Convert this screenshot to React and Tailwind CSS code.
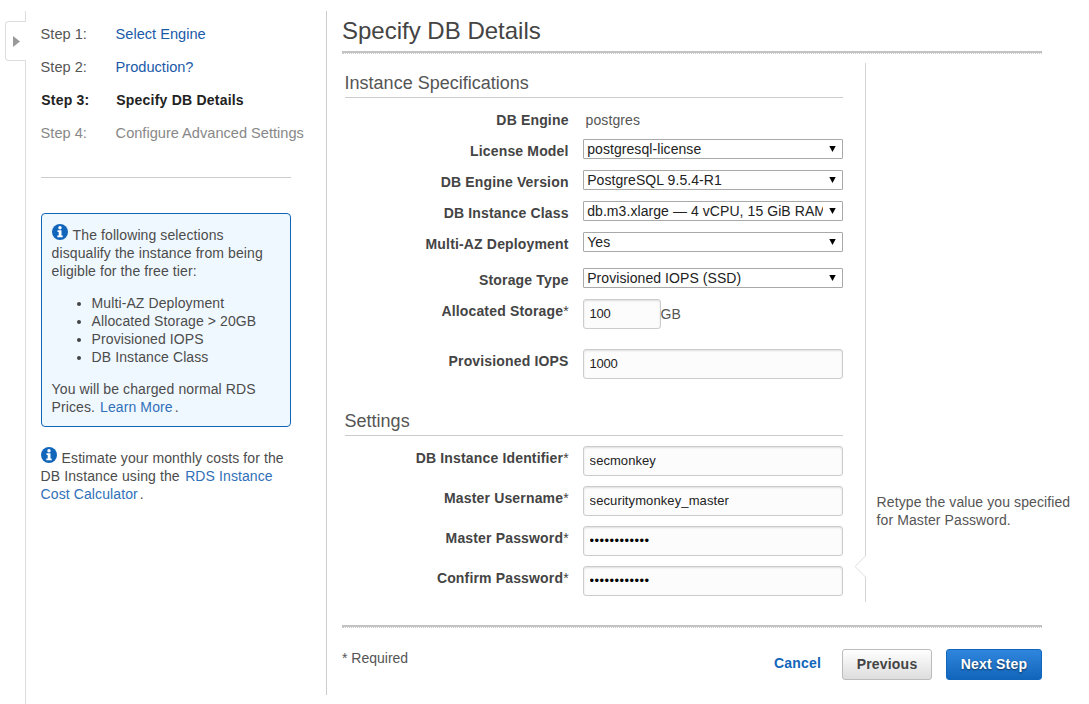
import React from "react";

const STEPS = [
  { n: "Step 1:", label: "Select Engine", state: "done" },
  { n: "Step 2:", label: "Production?", state: "done" },
  { n: "Step 3:", label: "Specify DB Details", state: "current" },
  { n: "Step 4:", label: "Configure Advanced Settings", state: "todo" },
];

function Step({ n, label, state }) {
  if (state === "current") {
    return (
      <li className="flex h-[33px] pl-[0.6px] text-[14px] font-bold tracking-[0.22px] text-[#222]">
        <span className="w-[75px]">{n}</span>
        <span>{label}</span>
      </li>
    );
  }
  return (
    <li className={`flex h-[33px] text-[14.6px] ${state === "todo" ? "text-[#888]" : "text-[#555]"}`}>
      <span className="w-[75px]">{n}</span>
      {state === "done" ? <a className="text-[#1a5aa8]">{label}</a> : <span>{label}</span>}
    </li>
  );
}

function Info() {
  return (
    <svg className="relative -top-[3px] mr-[5px] inline-block size-4 align-[-3px]" viewBox="0 0 16 16">
      <circle cx="8" cy="8" r="8" fill="#1166bb" />
      <circle cx="8" cy="3.7" r="1.7" fill="#fff" />
      <path d="M5.5 6.3h4v5.2h1.2v1.8H5.3v-1.8h1.4V8H5.5z" fill="#fff" />
    </svg>
  );
}

function Row({ label, required, className = "h-[31px]", children }) {
  return (
    <div className={`flex items-start ${className}`}>
      <div className="mr-[14px] w-[224px] shrink-0 text-right text-[14px] leading-6 font-bold tracking-[0.16px] whitespace-nowrap text-[#444]">
        {label}
        {required && <span className="font-normal tracking-normal">*</span>}
      </div>
      {children}
    </div>
  );
}

function Select({ value }) {
  return (
    <div className="flex h-5 w-[260px] items-center rounded-[1px] border border-[#a9a9a9] bg-white pl-[3.6px] text-[14px] leading-[18px] tracking-[0.07px] text-[#222]">
      <span className="w-[236px] shrink-0 overflow-hidden whitespace-nowrap">{value}</span>
      <svg className="ml-[6px] h-[6px] w-[7px] shrink-0" viewBox="0 0 7 6">
        <path d="M0.3 0h6.4L3.5 6z" fill="#000" />
      </svg>
    </div>
  );
}

function Field({ value, width = "w-[260px]", tracking = "tracking-[0.05px]" }) {
  return (
    <input
      type="text"
      defaultValue={value}
      className={`h-[30px] ${width} ${tracking} rounded-[3px] border border-[#ccc] bg-[#fcfcfc] px-[6px] pb-[2px] text-[13px] text-[#222] shadow-[inset_0_1px_2px_rgba(0,0,0,0.12)] outline-none`}
    />
  );
}

function PasswordField() {
  return (
    <input
      type="password"
      defaultValue="abcdefghijkl"
      className="h-[30px] w-[260px] rounded-[3px] border border-[#ccc] bg-[#fcfcfc] px-[6px] pb-[2px] text-[13px] tracking-[0.45px] text-black shadow-[inset_0_1px_2px_rgba(0,0,0,0.12)] outline-none"
    />
  );
}

function SectionTitle({ children }) {
  return <h2 className="h-[35px] border-b border-[#ccc] text-[18px] leading-10 text-[#555]">{children}</h2>;
}

function Rule() {
  return <div className="h-[3px] w-[700px] shrink-0 border-b border-dotted border-[#ccc] bg-[#c2c2c2] bg-clip-padding" />;
}

export default function App() {
  return (
    <div className="flex h-[704px] w-[1089px] overflow-hidden bg-white font-['Liberation_Sans',Arial,sans-serif] text-[14px] leading-[18px] text-[#555]">
      <div className="flex w-[26px] shrink-0 flex-col items-end pt-[11px]">
        <div className="h-[10px] w-px bg-[#ddd]" />
        <div className="flex h-10 w-[21px] items-center rounded-l-[4px] border border-r-0 border-[#ddd] pl-[7px]">
          <svg className="h-[11px] w-[7px]" viewBox="0 0 7 11">
            <path d="M0 0l7 5.5L0 11z" fill="#999" />
          </svg>
        </div>
        <div className="w-px flex-1 bg-[#ddd]" />
      </div>

      <aside className="mt-[11px] h-[684px] w-[301px] shrink-0 border-r border-[#ccc] pl-[14.6px]">
        <ul className="h-[166px] w-[280px] pt-[14px] whitespace-nowrap">
          {STEPS.map((s) => (
            <Step key={s.n} {...s} />
          ))}
        </ul>
        <div className="h-px w-[250px] bg-[#ccc]" />
        <div className="mt-[35px] h-[214px] w-[250px] rounded-[4px] border border-[#1166bb] bg-[#f0f8ff] px-[10px] pt-[12px] tracking-[0.1px] whitespace-nowrap text-[#4c4c4c]">
          <p>
            <Info />The following selections
            <br />
            disqualify the instance from being
            <br />
            eligible for the free tier:
          </p>
          <ul className="my-[14px]">
            {["Multi-AZ Deployment", "Allocated Storage > 20GB", "Provisioned IOPS", "DB Instance Class"].map((t) => (
              <li key={t} className="flex items-center pl-[25px]">
                <span className="mt-[2px] mr-[11px] size-1 rounded-full bg-[#444]" />
                {t}
              </li>
            ))}
          </ul>
          <p>
            You will be charged normal RDS
            <br />
            Prices. <a className="ml-px text-[#3070b8]">Learn More</a>
            <span className="ml-[2px]">.</span>
          </p>
        </div>
        <p className="mt-[22px] tracking-[0.1px] whitespace-nowrap text-[#4c4c4c]">
          <Info />Estimate your monthly costs for the
          <br />
          DB Instance using the <a className="ml-[1.5px] text-[#3070b8]">RDS Instance</a>
          <br />
          <a className="text-[#3070b8]">Cost Calculator</a>
          <span className="ml-[2px]">.</span>
        </p>
      </aside>

      <main className="ml-[15px] flex w-[740px] shrink-0 flex-col">
        <h1 className="h-[51px] pt-[11px] text-[24px] leading-10 text-[#444]">Specify DB Details</h1>
        <Rule />

        <div className="flex h-[571px]">
          <div className="mt-[9px] ml-[2.6px] w-[498px] shrink-0">
            <SectionTitle>Instance Specifications</SectionTitle>
            <div className="pt-[10px]">
              <Row label="DB Engine">
                <span className="pl-[3px] leading-6 tracking-[0.1px]">postgres</span>
              </Row>
              <Row label="License Model">
                <Select value="postgresql-license" />
              </Row>
              <Row label="DB Engine Version">
                <Select value="PostgreSQL 9.5.4-R1" />
              </Row>
              <Row label="DB Instance Class">
                <Select value="db.m3.xlarge — 4 vCPU, 15 GiB RAM" />
              </Row>
              <Row label="Multi-AZ Deployment" className="h-[36px]">
                <Select value="Yes" />
              </Row>
              <Row label="Storage Type">
                <Select value="Provisioned IOPS (SSD)" />
              </Row>
              <Row label="Allocated Storage" required className="h-[50px]">
                <Field value="100" width="w-[78px]" tracking="tracking-[-0.3px]" />
                <span className="leading-[30px]">GB</span>
              </Row>
              <Row label="Provisioned IOPS" className="h-[52px]">
                <Field value="1000" tracking="tracking-[-0.3px]" />
              </Row>
            </div>
            <SectionTitle>Settings</SectionTitle>
            <div className="pt-[10px]">
              <Row label="DB Instance Identifier" required className="h-10">
                <Field value="secmonkey" />
              </Row>
              <Row label="Master Username" required className="h-10">
                <Field value="securitymonkey_master" tracking="tracking-[0.1px]" />
              </Row>
              <Row label="Master Password" required className="h-10">
                <PasswordField />
              </Row>
              <Row label="Confirm Password" required className="h-10">
                <PasswordField />
              </Row>
            </div>
          </div>

          <div className="relative mt-[9px] ml-[22.4px] h-[539px] border-l border-[#d4d4d4] pt-[430px] pl-[10.6px] tracking-[0.1px] whitespace-nowrap">
            Retype the value you specified
            <br />
            for Master Password.
            <svg className="absolute top-[493px] -left-[12px] h-[21px] w-[12px]" viewBox="0 0 12 21">
              <path d="M11.5 0.5L1 10.5l10.5 10z" fill="#fff" />
              <path d="M12 0v21" stroke="#fff" strokeWidth="2" />
              <path d="M11.5 0L1 10.5l10.5 10.5" fill="none" stroke="#ddd" />
            </svg>
          </div>
        </div>

        <Rule />
        <footer className="flex w-[700px] items-start pt-[21px]">
          <span className="leading-[18px]">* Required</span>
          <div className="ml-auto flex items-start font-bold tracking-[0.2px]">
            <a className="mt-[5px] mr-[21px] text-[#1166bb]">Cancel</a>
            <button className="mr-[14px] h-[31px] w-[90px] rounded-[3px] border border-[#bbb] bg-linear-to-b from-white to-[#ddd] pb-px text-[#444]">
              Previous
            </button>
            <button className="h-[31px] w-[96px] rounded-[3px] border border-[#1166bb] bg-linear-to-b from-[#2f86dd] to-[#1166bb] pb-px text-white [text-shadow:0_1px_2px_rgba(0,0,0,0.6)]">
              Next Step
            </button>
          </div>
        </footer>
      </main>
    </div>
  );
}
